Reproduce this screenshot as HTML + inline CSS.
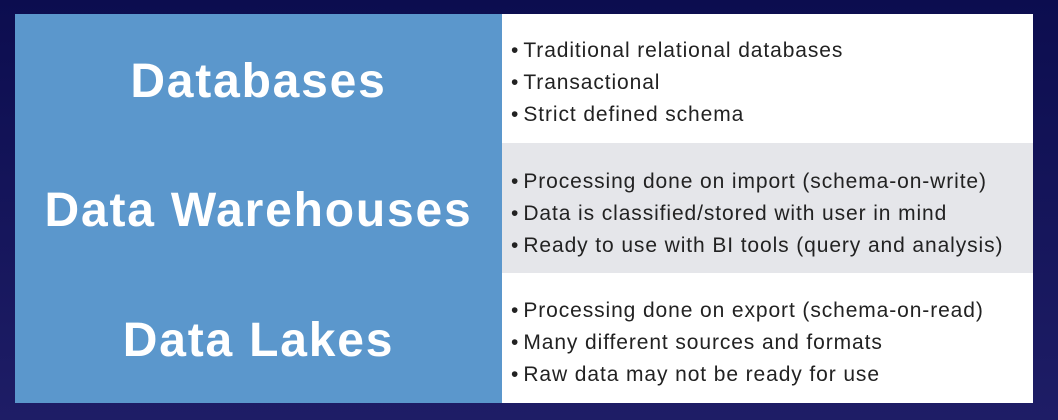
<!DOCTYPE html>
<html><head><style>
body{margin:0;width:1058px;height:420px;background:linear-gradient(#0c0d4f,#1e1d66);position:relative;overflow:hidden;font-family:"Liberation Sans",sans-serif}
.t{position:absolute;left:15px;top:14px;width:1018px;height:389px}
.row{position:absolute;left:0;width:1018px;height:130px}
.l{position:absolute;left:0;top:0;width:487px;height:100%;background:#5b97cc;color:#fff;font-weight:bold;font-size:48px;display:flex;align-items:center;justify-content:center;letter-spacing:1.8px;padding-top:5px;box-sizing:border-box}
.r{position:absolute;left:487px;top:0;width:531px;height:100%;background:#fff;color:#222;font-size:21px;letter-spacing:0.9px;display:flex;flex-direction:column;justify-content:center;padding-left:9px;box-sizing:border-box}
.r div{line-height:32px}
.r span{letter-spacing:0;margin-right:5px}
.g{background:#e5e6ea}
</style></head><body>
<div class="t">
<div class="row" style="top:0;height:129px"><div class="l">Databases</div><div class="r" style="padding-top:8px"><div><span>•</span>Traditional relational databases</div><div><span>•</span>Transactional</div><div><span>•</span>Strict defined schema</div></div></div>
<div class="row" style="top:129px"><div class="l">Data Warehouses</div><div class="r g" style="padding-top:12px"><div><span>•</span>Processing done on import (schema-on-write)</div><div><span>•</span>Data is classified/stored with user in mind</div><div><span>•</span>Ready to use with BI tools (query and analysis)</div></div></div>
<div class="row" style="top:259px"><div class="l">Data Lakes</div><div class="r" style="padding-top:10px"><div><span>•</span>Processing done on export (schema-on-read)</div><div><span>•</span>Many different sources and formats</div><div><span>•</span>Raw data may not be ready for use</div></div></div>
</div>
</body></html>
